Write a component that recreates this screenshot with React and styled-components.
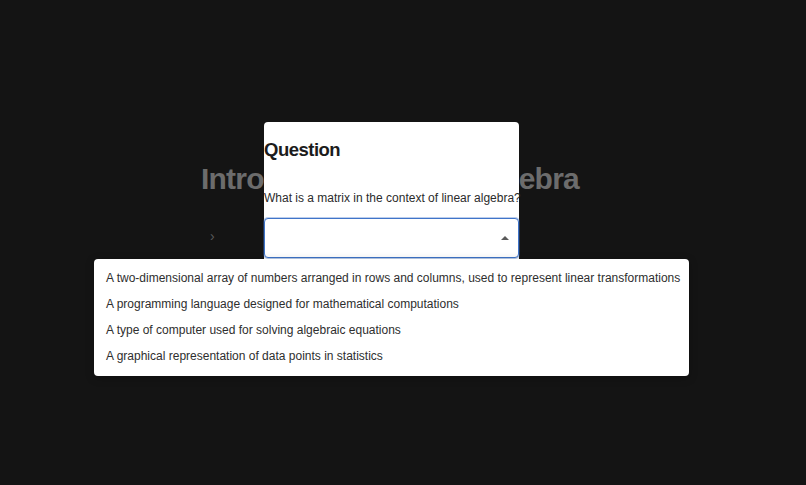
import React from 'react'
import styled, { createGlobalStyle } from 'styled-components'

const GlobalStyle = createGlobalStyle`
  html, body {
    margin: 0;
    padding: 0;
    background: #141414;
    font-family: "Liberation Sans", Arial, sans-serif;
  }
  #root {
    min-height: 485px;
  }
`

const options = [
  'A two-dimensional array of numbers arranged in rows and columns, used to represent linear transformations',
  'A programming language designed for mathematical computations',
  'A type of computer used for solving algebraic equations',
  'A graphical representation of data points in statistics',
]

const App = () => {
  return (
    <>
      <GlobalStyle />
      <Page>
        <Content>
          <Title>Introduction to Linear Algebra</Title>
          <Lessons>
            <Lesson><Chevron>›</Chevron></Lesson>
            <Lesson><Chevron>›</Chevron></Lesson>
          </Lessons>
        </Content>

        <Modal>
          <Heading>Question</Heading>
          <QuestionText>What is a matrix in the context of linear algebra?</QuestionText>
          <Select>
            <Arrow />
          </Select>
        </Modal>

        <Menu>
          {options.map((opt, i) => (
            <Option key={i}>{opt}</Option>
          ))}
        </Menu>
      </Page>
    </>
  )
}

export default App

const Page = styled.div`
  position: relative;
  width: 806px;
  height: 485px;
  overflow: hidden;
  background: #141414;
`

const Content = styled.div`
  display: flex;
  flex-direction: column;
  padding: 159px 0 0 201px;
`

const Title = styled.h1`
  margin: 0;
  font-size: 30px;
  line-height: 40px;
  font-weight: 700;
  letter-spacing: -0.8px;
  word-spacing: -9px;
  color: #6c6c6c;
  white-space: nowrap;
`

const Lessons = styled.ul`
  list-style: none;
  margin: 24px 0 0;
  padding: 0 0 0 9px;
  display: flex;
  flex-direction: column;
`

const Lesson = styled.li`
  height: 26px;
  display: flex;
  align-items: center;
`

const Chevron = styled.span`
  color: #5a5a5a;
  font-size: 14px;
`

const Modal = styled.div`
  position: absolute;
  left: 264px;
  top: 122px;
  width: 255px;
  height: 140px;
  background: #ffffff;
  border-radius: 4px 4px 0 0;
  display: flex;
  flex-direction: column;
  padding-top: 17px;
  box-sizing: border-box;
`

const Heading = styled.h2`
  margin: 0;
  font-size: 18.5px;
  line-height: 22px;
  font-weight: 700;
  letter-spacing: -0.5px;
  color: #1c1c1c;
`

const QuestionText = styled.p`
  margin: 30px 0 0;
  font-size: 12px;
  line-height: 15px;
  color: #2b2b2b;
  white-space: nowrap;
`

const Select = styled.div`
  margin-top: 12px;
  height: 40px;
  box-sizing: border-box;
  border: 1px solid #3f74c9;
  box-shadow: 0 0 0 1px rgba(63, 116, 201, 0.35);
  border-radius: 4px;
  background: #fff;
  display: flex;
  align-items: center;
  justify-content: flex-end;
  padding-right: 9px;
`

const Arrow = styled.span`
  width: 0;
  height: 0;
  border-left: 4px solid transparent;
  border-right: 4px solid transparent;
  border-bottom: 4px solid #5a5a5a;
`

const Menu = styled.ul`
  position: absolute;
  left: 94px;
  top: 259px;
  width: 595px;
  margin: 0;
  padding: 6px 0 7px;
  list-style: none;
  background: #ffffff;
  border-radius: 4px;
  box-shadow: 0 2px 8px rgba(0, 0, 0, 0.25);
  box-sizing: border-box;
`

const Option = styled.li`
  height: 26px;
  display: flex;
  align-items: center;
  padding: 0 12px;
  font-size: 12px;
  color: #2e2e2e;
  white-space: nowrap;
`
